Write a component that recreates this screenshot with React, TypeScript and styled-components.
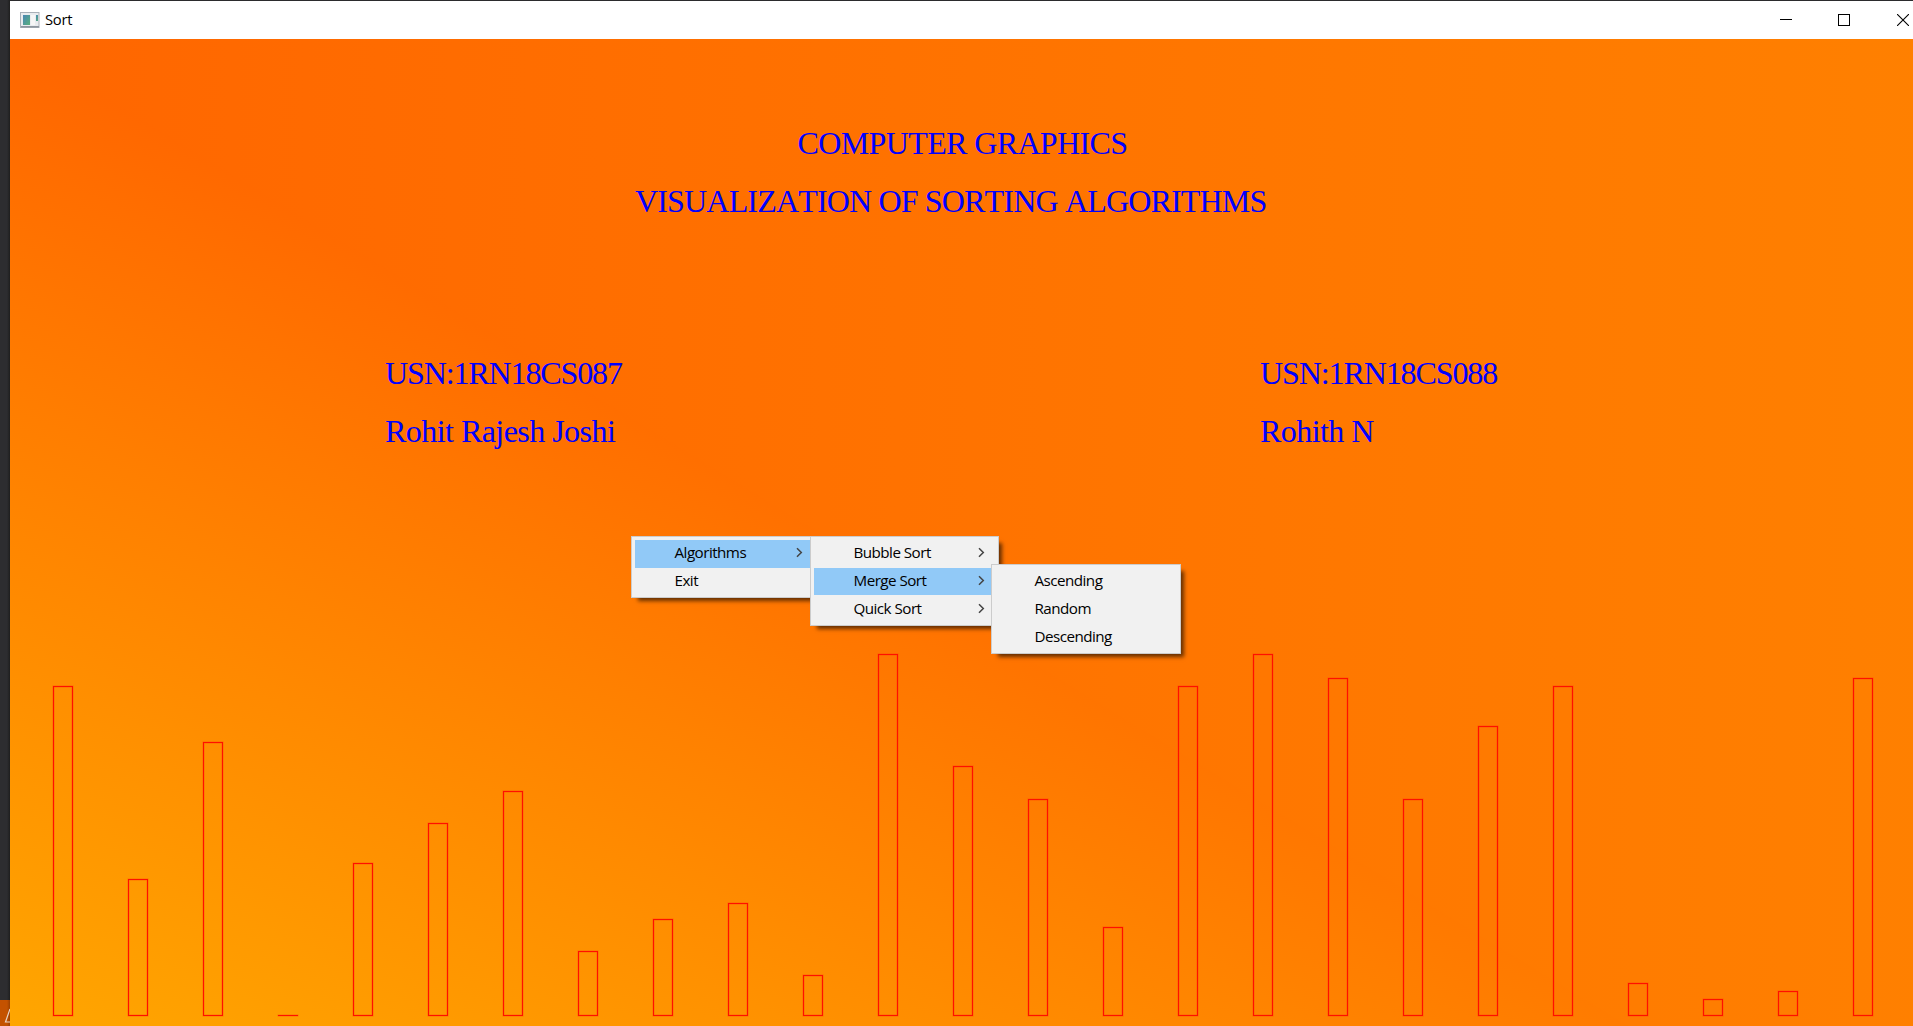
import React from "react";
import styled, { createGlobalStyle } from "styled-components";

const Global = createGlobalStyle`
  html, body { margin: 0; padding: 0; overflow: hidden; }
  * { box-sizing: border-box; }
`;

const Desktop = styled.div`
  display: flex;
  width: 1913px;
  height: 1026px;
  overflow: hidden;
  background: #2b2b2d;
`;

const Behind = styled.div`
  width: 10px;
  flex: none;
  display: flex;
  flex-direction: column;
  justify-content: space-between;
  background: linear-gradient(to right, #2d2d30 0, #2d2d30 7px, #232324 9px, #1e1e1e 10px);
`;

const StatusStrip = styled.div`
  margin-top: auto;
  height: 26px;
  overflow: hidden;
  background: linear-gradient(to right, #c45200 0, #c45200 7px, #9c4200 10px);
`;

const Win = styled.main`
  flex: none;
  width: 1922px;
  padding-top: 1px;
  display: flex;
  flex-direction: column;
`;

const TitleBar = styled.header`
  height: 38px;
  flex: none;
  display: flex;
  align-items: center;
  background: #fff;
  padding-left: 10px;
`;

const Title = styled.span`
  flex: 1;
  margin-left: 5px;
  padding-bottom: 1px;
  font: 14.8px/19px "Open Sans", "Noto Sans", sans-serif;
  letter-spacing: -0.3px;
  color: #000;
`;

const Caption = styled.div`
  width: 58.5px;
  height: 38px;
  display: flex;
  align-items: center;
  justify-content: center;
`;

const Stage = styled.section`
  position: relative;
  flex: none;
  width: 1922px;
  height: 1172px;
  display: flex;
  flex-direction: column;
  background: linear-gradient(to right, rgb(255, 102, 0), rgb(255, 128, 0));
`;

const LowerTriangle = styled.div`
  position: absolute;
  inset: 0;
  clip-path: polygon(0 0, 0 100%, 100% 100%);
  background: linear-gradient(202.12deg, rgb(255, 51, 0), rgb(255, 178, 0));
`;

const Credits = styled.div`
  position: relative;
  height: 615px;
  flex: none;
  padding-top: 76px;
`;

const Line = styled.div<{ $track: number; $indent?: number }>`
  margin-left: ${(p) => p.$indent ?? 0}px;
  font: 32px/57.5px "Liberation Serif", "Times New Roman", serif;
  font-kerning: none;
  letter-spacing: ${(p) => p.$track}px;
  color: #0000ff;
  white-space: pre;
`;

const Students = styled.div`
  display: flex;
  margin-top: 115px;
  padding-left: 375px;
`;

const Student = styled.div`
  flex: none;
  width: 875px;
`;

const Chart = styled.div`
  position: relative;
  flex: none;
  width: 1820.5px;
  height: 362px;
  margin-left: 42.5px;
  display: flex;
  align-items: flex-end;
  justify-content: space-between;
`;

const Bar = styled.div<{ $value: number }>`
  width: 20px;
  height: ${(p) => p.$value * 8.03 + 0.6}px;
  border: 1px solid #ff1000;
  box-shadow: 0 0 0 0.5px rgba(255, 20, 0, 0.3), inset 0 0 0 0.5px rgba(255, 20, 0, 0.3);
  ${(p) => p.$value === 0 && "height: 1px; border-width: 1px 0 0;"}
`;

const Menu = styled.ul<{ $x: number; $y: number; $w: number; $rows: number }>`
  position: absolute;
  left: ${(p) => p.$x}px;
  top: ${(p) => p.$y}px;
  width: ${(p) => p.$w}px;
  height: ${(p) => p.$rows * 27.6 + 7.2}px;
  margin: 0;
  padding: 3px 2px 3px 3px;
  list-style: none;
  background: #f1f1f1;
  border: 1px solid #ccc;
  box-shadow: 5px 5px 4px -2px rgba(0, 0, 0, 0.6);
`;

const Item = styled.li<{ $active?: boolean; $inset: number }>`
  display: flex;
  align-items: center;
  justify-content: space-between;
  height: 27.7px;
  padding: 0 ${(p) => p.$inset}px 2px 39.5px;
  background: ${(p) => (p.$active ? "#91c9f7" : "transparent")};
  font: 15.2px/25px "Open Sans", "Noto Sans", sans-serif;
  letter-spacing: -0.53px;
  color: #000;
  white-space: nowrap;
`;

const Arrow = () => (
  <svg width="7" height="11" viewBox="0 0 7 11" fill="none" stroke="#444" strokeWidth="1.5">
    <path d="M1 1.2 5.3 5.5 1 9.8" />
  </svg>
);

const AppIcon = () => (
  <svg width="20" height="16" viewBox="0 0 20 16">
    <defs>
      <linearGradient id="pane" x1="0" y1="0" x2="1" y2="1">
        <stop offset="0" stopColor="#4a86b4" />
        <stop offset="1" stopColor="#58b17c" />
      </linearGradient>
    </defs>
    <rect x="0.5" y="0.5" width="18.5" height="15" fill="#e9ecef" stroke="#a9b0b8" />
    <rect x="1" y="14" width="18" height="1.5" fill="#8e969e" />
    <rect x="3" y="3" width="7" height="10" fill="url(#pane)" />
    <rect x="11" y="3" width="4" height="10" fill="#f6f6f6" />
    <rect x="16" y="3" width="2" height="6" fill="url(#pane)" />
  </svg>
);

const values = [41, 17, 34, 0, 19, 24, 28, 8, 12, 14, 5, 45, 31, 27, 11, 41, 45, 42, 27, 36, 41, 4, 2, 3, 42];

const menus = [
  { x: 621, y: 497, w: 190, inset: 15, active: 0, nested: [true, false], items: ["Algorithms", "Exit"] },
  { x: 800, y: 497, w: 189, inset: 11, active: 1, nested: [true, true, true], items: ["Bubble Sort", "Merge Sort", "Quick Sort"] },
  { x: 981, y: 525, w: 190, inset: 11, active: -1, nested: [], items: ["Ascending", "Random", "Descending"] },
];

export default function App() {
  return (
    <Desktop>
      <Global />
      <Behind>
        <StatusStrip>
          <svg width="10" height="26" fill="none" stroke="#e8d3c4" strokeWidth="1.2">
            <path d="M10 9 5.5 22H10" />
          </svg>
        </StatusStrip>
      </Behind>
      <Win>
        <TitleBar>
          <AppIcon />
          <Title>Sort</Title>
          <Caption>
            <svg width="12" height="12" stroke="#000"><path d="M0 5.5H12" /></svg>
          </Caption>
          <Caption>
            <svg width="12" height="12" stroke="#000" fill="none"><rect x="0.5" y="0.5" width="11" height="11" /></svg>
          </Caption>
          <Caption>
            <svg width="12" height="12" stroke="#000" strokeWidth="1.1"><path d="M0 0 12 12M12 0 0 12" /></svg>
          </Caption>
        </TitleBar>
        <Stage>
          <LowerTriangle />
          <Credits>
            <Line $track={-0.62} $indent={787.5}>COMPUTER GRAPHICS</Line>
            <Line $track={-0.83} $indent={625}>VISUALIZATION OF SORTING ALGORITHMS</Line>
            <Students>
              <Student>
                <Line $track={-1.12}>USN:1RN18CS087</Line>
                <Line $track={-0.54}>Rohit Rajesh Joshi</Line>
              </Student>
              <Student>
                <Line $track={-1.1}>USN:1RN18CS088</Line>
                <Line $track={-0.57}>Rohith N</Line>
              </Student>
            </Students>
          </Credits>
          <Chart>
            {values.map((v, i) => (
              <Bar key={i} $value={v} />
            ))}
          </Chart>
          {menus.map((m) => (
            <Menu key={m.x} $x={m.x} $y={m.y} $w={m.w} $rows={m.items.length}>
              {m.items.map((label, i) => (
                <Item key={label} $active={i === m.active} $inset={m.inset}>
                  {label}
                  {m.nested[i] && <Arrow />}
                </Item>
              ))}
            </Menu>
          ))}
        </Stage>
      </Win>
    </Desktop>
  );
}
